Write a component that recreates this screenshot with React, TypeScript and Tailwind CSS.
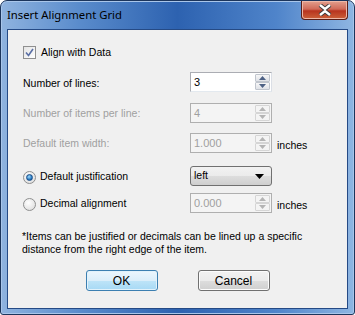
import React from "react";

const font = "font-['Liberation_Sans',Arial,sans-serif]";

const Spin = ({ value, disabled }: { value: string; disabled?: boolean }) => {
  const arrow = disabled ? "#b4b4b4" : "#4d6185";
  return (
    <div
      className={`flex h-[20px] w-[82px] border ${
        disabled
          ? "border-[#afafaf] bg-[#f4f4f4]"
          : "border-[#abadb3] border-r-[#dbdfe6] border-b-[#e3e9ef] bg-white"
      }`}
    >
      <div
        className={`flex-1 pl-[3px] text-[11px] leading-[18px] ${
          disabled ? "text-[#a0a0a0]" : "text-black"
        }`}
      >
        {value}
      </div>
      <div className="flex flex-col w-[16px] py-[1px] pr-[1px]">
        {[0, 1].map((i) => (
          <div
            key={i}
            className={`flex-1 flex items-center justify-center border rounded-[1px] ${
              disabled
                ? "border-[#d5d5d5] bg-[#f4f4f4]"
                : "border-[#c0c5cd] bg-[linear-gradient(#f7f7f7,#dfe2e7)]"
            }`}
          >
            <svg width="7" height="4" viewBox="0 0 7 4">
              {i === 0 ? (
                <path d="M0 4 L3.5 0 L7 4 Z" fill={arrow} />
              ) : (
                <path d="M0 0 L3.5 4 L7 0 Z" fill={arrow} />
              )}
            </svg>
          </div>
        ))}
      </div>
    </div>
  );
};

const Radio = ({ checked }: { checked?: boolean }) => (
  <div className="w-[13px] h-[13px] rounded-full border border-[#8e8f8f] bg-[radial-gradient(circle_at_40%_35%,#ffffff,#d8d8d8)] flex items-center justify-center">
    {checked && (
      <div className="w-[7px] h-[7px] rounded-full bg-[radial-gradient(circle_at_40%_35%,#9fdcff,#1a6bb5_70%,#0b3f7a)] border border-[#1b4f8a]" />
    )}
  </div>
);

const Button = ({ label, primary }: { label: string; primary?: boolean }) => (
  <div
    className={`w-[72px] h-[21px] rounded-[3px] border flex items-center justify-center text-[12px] text-black ${
      primary
        ? "border-[#3c7fb1] bg-[linear-gradient(#ecf6fd_0%,#dbeefa_50%,#bee4f8_51%,#a7d9f5_100%)] shadow-[inset_0_0_0_1px_#e2f2fb]"
        : "border-[#707070] bg-[linear-gradient(#f2f2f2_0%,#ebebeb_50%,#dddddd_51%,#cfcfcf_100%)] shadow-[inset_0_0_0_1px_#fcfcfc]"
    }`}
  >
    {label}
  </div>
);

export default function App() {
  return (
    <div className={`w-[355px] h-[315px] bg-white ${font}`}>
      <div className="w-[355px] h-[315px] rounded-t-[7px] rounded-b-[3px] border border-[#1c355c] bg-[linear-gradient(90deg,#8fb3df_0%,#5a8ccc_22%,#2d62b0_50%,#4f84ca_78%,#8fb6e2_100%)] shadow-[inset_0_0_0_1px_#a9c6ea] flex flex-col px-[6px] pb-[5px]">
        <div className="h-[28px] flex items-start justify-between">
          <div className="pt-[6px] text-[11.3px] text-black font-['Noto_Sans',sans-serif] leading-[16px]">
            Insert Alignment Grid
          </div>
          <div className="w-[47px] h-[19px] rounded-b-[4px] border border-t-0 border-[#5a1e18] bg-[linear-gradient(#e3a08e_0%,#d06a58_45%,#b8341f_55%,#cc623a_100%)] shadow-[inset_0_0_0_1px_#eeb8a8] flex items-center justify-center">
            <svg width="14" height="12" viewBox="0 0 14 12">
              <path d="M2 1 L7 5 L12 1 M2 11 L7 7 L12 11" stroke="#3a3a3a" strokeWidth="4.2" fill="none" />
              <path d="M2 1 L7 5 L12 1 M2 11 L7 7 L12 11" stroke="#ffffff" strokeWidth="2.4" fill="none" />
            </svg>
          </div>
        </div>
        <div className="flex-1 border border-[#254a85] bg-[#f0f0f0] flex flex-col pl-[15px] text-[10.5px] text-black">
          <div className="mt-[16px] flex items-center h-[13px] gap-[3px]">
            <div className="w-[13px] h-[13px] border border-[#8f8f8f] bg-[linear-gradient(135deg,#e4e4e4,#ffffff)] flex items-center justify-center">
              <svg width="9" height="9" viewBox="0 0 9 9">
                <path d="M1 4.5 L3.5 7.5 L8 1" stroke="#5a6fa5" strokeWidth="1.6" fill="none" />
              </svg>
            </div>
            <span className="ml-[2px]">Align with Data</span>
          </div>

          <div className="mt-[13px] flex items-center h-[20px]">
            <span className="w-[167px] pt-[3px]">Number of lines:</span>
            <Spin value="3" />
          </div>

          <div className="mt-[11px] flex items-center h-[20px] text-[#a0a0a0]">
            <span className="w-[167px] pt-[2px]">Number of items per line:</span>
            <Spin value="4" disabled />
          </div>

          <div className="mt-[10px] flex items-center h-[20px]">
            <span className="w-[167px] pt-[2px] text-[#a0a0a0]">Default item width:</span>
            <Spin value="1.000" disabled />
            <span className="ml-[5px] pt-[6px]">inches</span>
          </div>

          <div className="mt-[13px] flex items-center h-[20px]">
            <div className="w-[167px] flex items-center gap-[4px] pt-[2px]">
              <Radio checked />
              <span>Default justification</span>
            </div>
            <div className="w-[82px] h-[20px] rounded-[3px] border border-[#707070] bg-[linear-gradient(#f2f2f2_0%,#ebebeb_50%,#dddddd_51%,#cfcfcf_100%)] flex items-center justify-between pl-[3px] pr-[7px]">
              <span>left</span>
              <svg width="9" height="5" viewBox="0 0 9 5">
                <path d="M0 0 L9 0 L4.5 5 Z" fill="#000" />
              </svg>
            </div>
          </div>

          <div className="mt-[7px] flex items-center h-[20px]">
            <div className="w-[167px] flex items-center gap-[4px] pt-[2px]">
              <Radio />
              <span>Decimal alignment</span>
            </div>
            <Spin value="0.000" disabled />
            <span className="ml-[5px] pt-[6px]">inches</span>
          </div>

          <div className="mt-[17px] leading-[13px] -ml-[1px]">
            <div>*Items can be justified or decimals can be lined up a specific</div>
            <div>distance from the right edge of the item.</div>
          </div>

          <div className="mt-[14px] flex justify-center gap-[40px] pr-[15px]">
            <Button label="OK" primary />
            <Button label="Cancel" />
          </div>
        </div>
      </div>
    </div>
  );
}
